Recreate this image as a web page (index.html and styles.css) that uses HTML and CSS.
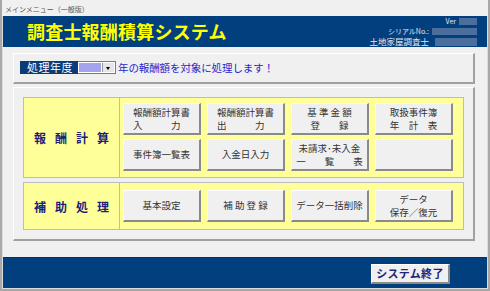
FILE: index.html
```html
<!DOCTYPE html>
<html>
<head>
    <title>メインメニュー（一般版）</title>
    <link rel="stylesheet" href="styles.css">
</head>
<body>
    <div class="window">
        <div class="titlebar">メインメニュー（一般版）</div>

        <div class="header">
            <h1>調査士報酬積算システム</h1>
            <div class="info">
                <div class="info-row ver">Ver<span class="blank ver-blank"></span></div>
                <div class="info-row">シリアルNo.:<span class="blank serial-blank"></span></div>
                <div class="info-row large">土地家屋調査士<span class="blank name-blank"></span></div>
            </div>
        </div>

        <div class="content">
            <div class="panel year-panel">
                <span class="year-label">処理年度</span>
                <span class="combo">
                    <span class="combo-value"></span>
                    <span class="combo-arrow"></span>
                </span>
                <span class="year-text">年の報酬額を対象に処理します！</span>
            </div>

            <div class="panel menu-panel">
                <div class="group calc">
                    <div class="group-label">報酬計算</div>
                    <div class="buttons">
                        <button>報酬額計算書<br>入　　　力　</button>
                        <button>報酬額計算書<br>出　　　力　</button>
                        <button>基 準 金 額<br>登　　録</button>
                        <button>取扱事件簿<br>年　計　表</button>
                        <button>事件簿一覧表</button>
                        <button>入金日入力</button>
                        <button>未請求･未入金<br>一　　覧　　表</button>
                        <button></button>
                    </div>
                </div>
                <div class="group tools">
                    <div class="group-label">補助処理</div>
                    <div class="buttons">
                        <button>基本設定</button>
                        <button>補 助 登 録</button>
                        <button>データ一括削除</button>
                        <button>データ<br>保存／復元</button>
                    </div>
                </div>
            </div>
        </div>

        <div class="footer">
            <button class="exit">システム終了</button>
        </div>
    </div>
</body>
</html>
```

FILE: styles.css
```css
body {
    margin: 0;
    background: #f0f0f0;
    font-family: "Noto Sans CJK JP", "Noto Sans", sans-serif;
}
.window {
    width: 490px;
    height: 291px;
    box-sizing: border-box;
    border: 2px solid #a8a8a8;
    border-top: none;
    padding: 0 1px 1px;
    background: #dcdcdc;
    display: flex;
    flex-direction: column;
}
.titlebar {
    height: 16px;
    margin: 0 -1px;
    padding-left: 3px;
    box-sizing: border-box;
    background: #f0f0f0;
    color: #555;
    font-size: 7px;
    line-height: 19px;
}

/* header */
.header {
    height: 31px;
    background: #013f7f;
    display: flex;
    justify-content: space-between;
    padding: 0 10px 0 24px;
}
h1 {
    margin: 0;
    color: #ffff00;
    font-size: 18px;
    font-weight: bold;
    line-height: 31px;
    letter-spacing: 0.2px;
}
.info {
    display: flex;
    flex-direction: column;
    align-items: flex-end;
    padding-top: 1px;
}
.info-row {
    display: flex;
    align-items: center;
    height: 10px;
    line-height: 10px;
    color: #e6e8f0;
    font-size: 7px;
}
.info-row.ver {
    height: 9px;
    line-height: 9px;
}
.info-row.large {
    height: 11px;
    line-height: 11px;
    font-size: 8.5px;
}
.blank {
    display: inline-block;
    height: 7px;
    margin-left: 3px;
    background: #4b6e9d;
}
.ver-blank { width: 18px; }
.serial-blank { width: 45px; }
.name-blank { width: 42px; height: 8px; margin-left: 6px; }

/* content */
.content {
    height: 210px;
    background: #f0f0f0;
    padding: 6px 12px 0 10px;
    box-sizing: border-box;
}
.panel {
    border: 1px solid #fff;
    border-right: 2px solid #a0a0a0;
    border-bottom: 2px solid #a0a0a0;
    box-sizing: border-box;
}
.year-panel {
    height: 31px;
    display: flex;
    align-items: center;
    padding: 0 0 2px 6px;
}
.year-label {
    background: #0b3b78;
    color: #fff;
    font-size: 11px;
    line-height: 13px;
    padding: 0 5px 0 7px;
    letter-spacing: 0.5px;
}
.combo {
    display: flex;
    height: 13px;
    background: #fff;
    border: 1px solid #7a7a7a;
    border-left: none;
    box-sizing: border-box;
    width: 38px;
    padding: 1px;
}
.combo-value {
    width: 23px;
    background: #a4a4ee;
}
.combo-arrow {
    width: 11px;
    margin-left: 1px;
    background: #e6e6e6;
    border-left: 1px solid #999;
    position: relative;
}
.combo-arrow::after {
    content: "";
    position: absolute;
    left: 3px;
    top: 4px;
    border: 2px solid transparent;
    border-top: 3px solid #000;
}
.year-text {
    color: #1f1fcf;
    font-size: 10.5px;
    margin-left: 2px;
    letter-spacing: -0.1px;
}
.menu-panel {
    margin-top: 3px;
    height: 154px;
    padding: 9px 9px 0 9px;
}
.group {
    display: flex;
    background: #ffff99;
    border: 1px solid #bdbdbd;
}
.group + .group {
    margin-top: 4px;
}
.group-label {
    width: 96px;
    border-right: 1px solid #bdbdbd;
    display: flex;
    align-items: center;
    justify-content: center;
    color: #1c1c7c;
    font-size: 12px;
    font-weight: bold;
    letter-spacing: 9px;
    padding-left: 9px;
    box-sizing: border-box;
}
.buttons {
    display: grid;
    grid-template-columns: repeat(4, 78px);
    grid-auto-rows: 32px;
    gap: 4px 6px;
    padding: 5px 9px 6px 3px;
}
.tools .buttons {
    padding-top: 7px;
    padding-bottom: 7px;
}
button {
    margin: 0;
    padding: 0;
    background: #f0f0f0;
    border: 1px solid #fff;
    border-right: 2px solid #8a8a8a;
    border-bottom: 2px solid #8a8a8a;
    font-family: "Noto Sans CJK JP", sans-serif;
    font-size: 9.5px;
    line-height: 13px;
    color: #333;
    white-space: pre;
}

/* footer */
.footer {
    height: 31px;
    background: #013f7f;
    border-top: 1px solid #1e2a48;
    display: flex;
    justify-content: flex-end;
    padding: 6px 37px 0 0;
    box-sizing: border-box;
}
.exit {
    width: 79px;
    height: 20px;
    color: #24247a;
    font-size: 11px;
    font-weight: bold;
    letter-spacing: 0.3px;
}
```
